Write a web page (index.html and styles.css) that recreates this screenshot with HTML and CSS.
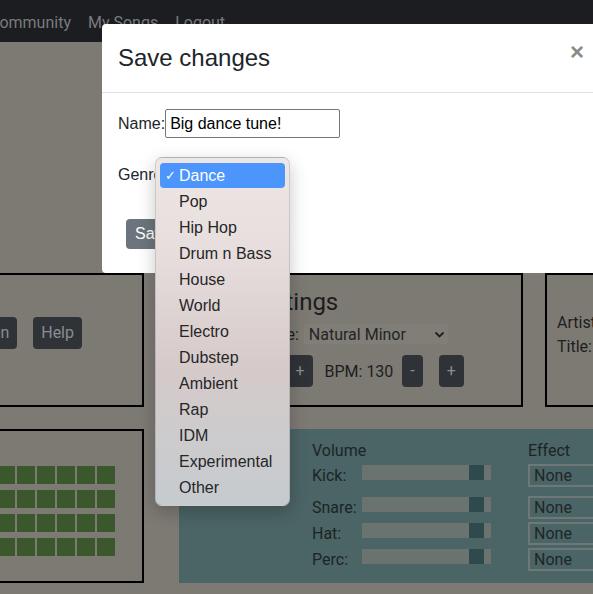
FILE: index.html
```html
<!DOCTYPE html>
<html lang="en">
<head>
<meta charset="utf-8">
<title>Save changes</title>
<link rel="stylesheet" href="styles.css">
</head>
<body>
<nav class="navbar">
  <a class="nav-link nav-first">Community</a>
  <a class="nav-link">My Songs</a>
  <a class="nav-link">Logout</a>
</nav>

<main class="page">
  <section class="row row-top">
    <div class="panel panel-controls">
      <button class="btn-dark">Play</button>
      <button class="btn-dark">Stop</button>
      <button class="btn-dark">Open</button>
      <button class="btn-dark">Help</button>
    </div>
    <div class="panel panel-settings">
      <h2 class="settings-title">Song Settings</h2>
      <div class="settings-row scale-row">
        <span class="key-group"></span>
        <span class="scale-label">Scale:</span>
        <div class="fake-select scale-select">
          <span>Natural Minor</span>
          <svg class="chevron" width="11" height="7" viewBox="0 0 11 7"><path d="M1.5 1.5 L5.5 5.5 L9.5 1.5" fill="none" stroke="#1f1f1f" stroke-width="1.8"/></svg>
        </div>
      </div>
      <div class="settings-row button-row">
        <span class="pitch-label"></span>
        <button class="btn-dark btn-minus">-</button>
        <button class="btn-dark btn-plus">+</button>
        <span class="bpm-label">BPM: 130</span>
        <button class="btn-dark btn-minus">-</button>
        <button class="btn-dark btn-plus">+</button>
      </div>
    </div>
    <div class="panel panel-info">
      <div>Artist:</div>
      <div>Title:</div>
    </div>
  </section>

  <section class="row row-bottom">
    <div class="panel panel-grid">
      <div class="steps">
        <span class="step"></span><span class="step"></span><span class="step"></span><span class="step"></span>
        <span class="step"></span><span class="step"></span><span class="step"></span><span class="step"></span>
        <span class="step"></span><span class="step"></span><span class="step"></span><span class="step"></span>
        <span class="step"></span><span class="step"></span><span class="step"></span><span class="step"></span>
        <span class="step"></span><span class="step"></span><span class="step"></span><span class="step"></span>
        <span class="step"></span><span class="step"></span><span class="step"></span><span class="step"></span>
        <span class="step"></span><span class="step"></span><span class="step"></span><span class="step"></span>
        <span class="step"></span><span class="step"></span><span class="step"></span><span class="step"></span>
        <span class="step"></span><span class="step"></span><span class="step"></span><span class="step"></span>
        <span class="step"></span><span class="step"></span><span class="step"></span><span class="step"></span>
        <span class="step"></span><span class="step"></span><span class="step"></span><span class="step"></span>
        <span class="step"></span><span class="step"></span><span class="step"></span><span class="step"></span>
        <span class="step"></span><span class="step"></span><span class="step"></span><span class="step"></span>
        <span class="step"></span><span class="step"></span><span class="step"></span><span class="step"></span>
        <span class="step"></span><span class="step"></span><span class="step"></span><span class="step"></span>
        <span class="step"></span><span class="step"></span><span class="step"></span><span class="step"></span>
      </div>
    </div>
    <div class="mixer">
      <div class="mix-head">
        <span class="mix-volume">Volume</span>
        <span class="mix-effect">Effect</span>
      </div>
      <div class="mix-row mix-kick">
        <span class="mix-label">Kick:</span>
        <div class="track"><span class="thumb" style="margin-left:107px"></span></div>
        <div class="fx-select">None</div>
      </div>
      <div class="mix-row">
        <span class="mix-label">Snare:</span>
        <div class="track"><span class="thumb" style="margin-left:107px"></span></div>
        <div class="fx-select">None</div>
      </div>
      <div class="mix-row">
        <span class="mix-label">Hat:</span>
        <div class="track"><span class="thumb" style="margin-left:107px"></span></div>
        <div class="fx-select">None</div>
      </div>
      <div class="mix-row">
        <span class="mix-label">Perc:</span>
        <div class="track"><span class="thumb" style="margin-left:107px"></span></div>
        <div class="fx-select">None</div>
      </div>
    </div>
  </section>
</main>

<div class="modal">
  <div class="modal-header">
    <h5 class="modal-title">Save changes</h5>
    <button class="close" aria-label="Close">&times;</button>
  </div>
  <div class="modal-body">
    <div class="form-row name-row">
      <label class="form-label">Name:</label>
      <input class="name-input" type="text" value="Big dance tune!">
    </div>
    <div class="form-row genre-row">
      <label class="form-label">Genre</label>
      <ul class="genre-menu">
        <li class="genre-item selected"><span class="check">✓</span>Dance</li>
        <li class="genre-item">Pop</li>
        <li class="genre-item">Hip Hop</li>
        <li class="genre-item">Drum n Bass</li>
        <li class="genre-item">House</li>
        <li class="genre-item">World</li>
        <li class="genre-item">Electro</li>
        <li class="genre-item">Dubstep</li>
        <li class="genre-item">Ambient</li>
        <li class="genre-item">Rap</li>
        <li class="genre-item">IDM</li>
        <li class="genre-item">Experimental</li>
        <li class="genre-item">Other</li>
      </ul>
    </div>
    <button class="btn-save">Save</button>
  </div>
</div>
</body>
</html>
```

FILE: styles.css
```css
* { box-sizing: border-box; }

html, body {
  margin: 0;
  padding: 0;
  overflow: hidden;
}

body {
  background: #7d7a74;
  font-family: Roboto, "Liberation Sans", sans-serif;
  font-size: 16px;
  color: #1e1e1e;
  width: 593px;
  height: 594px;
  position: relative;
}

/* navbar */
.navbar {
  height: 42px;
  background: #1b1d20;
  display: flex;
  gap: 17px;
  padding-top: 3px;
  line-height: 39px;
}
.nav-link {
  color: #797b7e;
  white-space: nowrap;
}
.nav-first { margin-left: -11px; }

/* page */
.page {
  margin-left: -213px;
  margin-top: 231px;
  display: flex;
  flex-direction: column;
  gap: 22px;
}
.row {
  display: flex;
  gap: 22px;
}
.panel {
  border: 2px solid #000;
  flex: 0 0 357px;
}
.row-top .panel { height: 134px; }
.row-bottom { gap: 35px; }
.row-bottom .panel { height: 154px; }

.btn-dark {
  font-family: Roboto, sans-serif;
  font-size: 16px;
  height: 32px;
  padding: 0 8px;
  border: 0;
  border-radius: 4px;
  background: #2f3337;
  color: #898d91;
  line-height: 32px;
}

.panel-controls {
  display: flex;
  justify-content: flex-end;
  align-items: flex-start;
  gap: 16px;
  padding: 42px 60px 0 0;
}

.panel-settings {
  padding: 13px 0 0 22px;
}
.settings-title {
  margin: 0;
  font-size: 24px;
  font-weight: 400;
  line-height: 28px;
  white-space: nowrap;
  color: #1c1c1c;
}
.settings-row {
  display: flex;
  align-items: center;
  white-space: nowrap;
}
.scale-row {
  margin-top: 8px;
  height: 20px;
}
.key-group {
  width: 66px;
}
.fake-select {
  display: flex;
  align-items: center;
}
.scale-select {
  margin-left: 5px;
  width: 144px;
  height: 20px;
  padding-left: 5px;
  background: #817e78;
  color: #242424;
  position: relative;
}
.chevron {
  position: absolute;
  right: 3px;
  top: 7px;
}
.button-row {
  margin-top: 11px;
  height: 32px;
}
.pitch-label {
  width: 52px;
}
.btn-minus { margin-left: 9px; }
.btn-plus { margin-left: 16px; }
.bpm-label { margin-left: 12px; }

.panel-info {
  padding: 36px 10px 0;
  line-height: 24px;
  white-space: nowrap;
}

/* step grid */
.panel-grid {
  padding: 35px 27px 0 0;
  display: flex;
  justify-content: flex-end;
}
.steps {
  display: grid;
  grid-template-columns: repeat(16, 18px);
  grid-auto-rows: 18px;
  column-gap: 2px;
  row-gap: 6px;
}
.step {
  background: #3b582d;
}

/* mixer */
.mixer {
  flex: 0 0 500px;
  height: 154px;
  background: #4b6465;
  padding: 12px 0 0 133px;
  color: #1b2425;
}
.mix-head {
  display: flex;
  height: 20px;
  line-height: 20px;
}
.mix-volume { width: 216px; }
.mix-row {
  display: flex;
  height: 23px;
  margin-top: 3px;
  line-height: 23px;
}
.mix-kick + .mix-row { margin-top: 9px; }
.mix-label { width: 50px; }
.track {
  width: 129px;
  height: 15px;
  margin-top: 1px;
  background: #6b7371;
  display: flex;
}
.thumb {
  width: 15px;
  height: 15px;
  background: #2f4a4c;
}
.fx-select {
  margin-left: 37px;
  width: 100px;
  height: 23px;
  border: 2px solid #6e7977;
  padding-left: 4px;
  line-height: 19px;
  color: #1d2728;
}

/* modal */
.modal {
  position: absolute;
  left: 102px;
  top: 24px;
  width: 498px;
  background: #fff;
  border-radius: 4px;
  font-family: "Liberation Sans", Arial, sans-serif;
  color: #212529;
}
.modal-header {
  display: flex;
  padding: 16px;
  border-bottom: 1px solid #dee2e6;
}
.modal-title {
  margin: 0;
  font-size: 24px;
  font-weight: 400;
  line-height: 36px;
}
.close {
  margin-left: auto;
  align-self: flex-start;
  border: 0;
  background: none;
  padding: 0;
  font-family: "Liberation Sans", Arial, sans-serif;
  font-size: 24px;
  font-weight: 700;
  line-height: 1;
  color: #8a8a8a;
}
.modal-body {
  padding: 16px;
}
.form-row {
  display: flex;
  align-items: center;
  font-size: 16px;
}
.name-row { height: 29px; }
.name-input {
  width: 175px;
  height: 29px;
  margin: 0;
  padding: 0 4px;
  border: 1px solid #767676;
  border-radius: 2px;
  font-family: "Liberation Sans", Arial, sans-serif;
  font-size: 16px;
  color: #000;
}
.genre-row {
  margin-top: 24px;
  height: 26px;
  position: relative;
}
.genre-menu {
  position: absolute;
  left: 37px;
  top: -5px;
  width: 135px;
  margin: 0;
  padding: 5px 4px 4px;
  list-style: none;
  border-radius: 7px;
  border: 1px solid rgba(0,0,0,0.12);
  background: linear-gradient(180deg, #eee7e6 0%, #e6dcdc 30%, #d6caca 60%, #cdcbcd 80%, #c6cbcf 100%);
  box-shadow: 0 6px 18px rgba(0,0,0,0.22);
  color: #262626;
}
.genre-item {
  position: relative;
  height: 26px;
  line-height: 26px;
  padding-left: 19px;
  white-space: nowrap;
  border-radius: 4px;
}
.genre-item.selected {
  background: #4b95fc;
  color: #fff;
  height: 25px;
  margin-bottom: 1px;
  line-height: 25px;
}
.check {
  position: absolute;
  left: 5px;
  top: 0;
  font-size: 13px;
  font-family: "DejaVu Sans", sans-serif;
}
.btn-save {
  margin: 31px 0 8px 8px;
  height: 30px;
  padding: 0 9px;
  border: 0;
  border-radius: 4px;
  background: #6c757d;
  color: #fff;
  font-family: "Liberation Sans", Arial, sans-serif;
  font-size: 16px;
}
```
